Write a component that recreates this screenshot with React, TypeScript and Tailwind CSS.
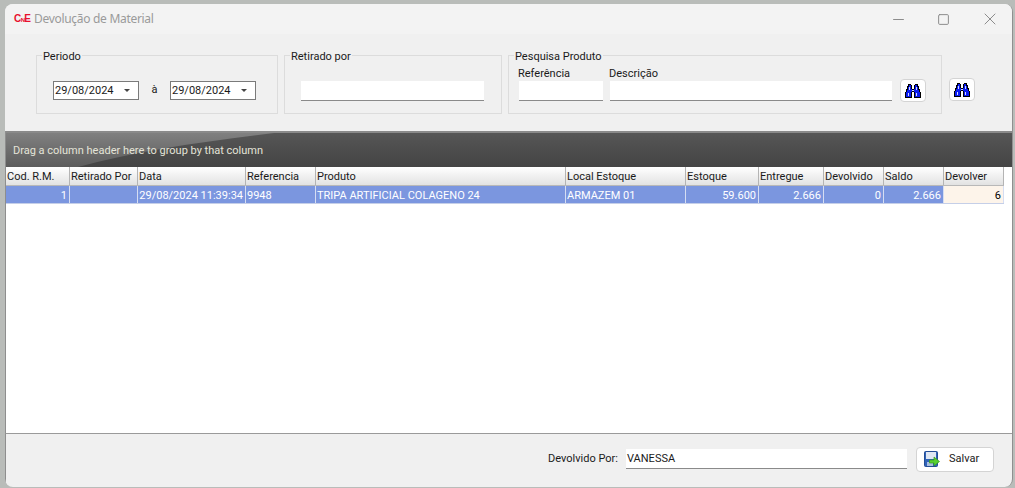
import React from 'react';
import { Minus, Square, X } from 'lucide-react';

const columns = [
  { label: 'Cod. R.M.', width: 'w-[64px]', value: '1', right: true },
  { label: 'Retirado Por', width: 'w-[68px]', value: '' },
  { label: 'Data', width: 'w-[108px]', value: '29/08/2024 11:39:34', right: true },
  { label: 'Referencia', width: 'w-[70px]', value: '9948' },
  { label: 'Produto', width: 'w-[250px]', value: 'TRIPA ARTIFICIAL COLAGENO 24' },
  { label: 'Local Estoque', width: 'w-[120px]', value: 'ARMAZEM 01' },
  { label: 'Estoque', width: 'w-[73px]', value: '59.600', right: true },
  { label: 'Entregue', width: 'w-[65px]', value: '2.666', right: true },
  { label: 'Devolvido', width: 'w-[60px]', value: '0', right: true },
  { label: 'Saldo', width: 'w-[60px]', value: '2.666', right: true },
];

function Binoculars() {
  return (
    <svg width="16" height="14" viewBox="0 0 16 14" shapeRendering="crispEdges">
      <path d="M3 0h3v1h1v4h2V1h1V0h3v2h1v3h1v3h1v6H9V8H7v6H0V8h1V5h1V2h1z" fill="#000" />
      <path d="M4 1h2v4h1v2h2V5h1V1h2v2h1v3h1v2h1v5h-5V8H9V7H7v1H6v5H1V8h1V6h1V3h1z" fill="#0b1cf2" />
      <path d="M4 3h1v3H4zM3 9h1v3H3zM11 3h1v3h-1zM11 9h1v3h-1zM7 6h2v1H7z" fill="#cfd6ff" />
    </svg>
  );
}

function SaveIcon() {
  return (
    <svg width="16" height="16" viewBox="0 0 16 16">
      <rect x="0.500" y="0.500" width="13" height="15" rx="1" fill="#2f62b8" stroke="#234c94" />
      <rect x="2" y="1" width="10" height="7" fill="#dfe7f3" />
      <rect x="3" y="11" width="6" height="4" fill="#a9bedd" />
      <path d="M5.500 9h4.500V6l5.500 4.500-5.500 4.500v-3H5.500z" fill="#58d02f" stroke="#2f9a1c" strokeWidth="0.7" />
    </svg>
  );
}

function GroupBox({ title, className, children }: { title: string; className: string; children: React.ReactNode }) {
  return (
    <div className={`relative border border-[#dcdcdc] h-[59px] ${className}`}>
      <span className="absolute -top-[7px] left-[5px] bg-[#f0f0f0] px-px leading-[15px] text-[#1a1a1a]">{title}</span>
      {children}
    </div>
  );
}

function DateInput({ value }: { value: string }) {
  return (
    <div className="flex items-center justify-between w-[86px] h-[19px] bg-white border border-[#7a7a7a] pl-px pr-[8px]">
      <span className="pt-px">{value}</span>
      <span className="w-0 h-0 border-x-[3px] border-x-transparent border-t-[3px] border-t-[#444]" />
    </div>
  );
}

function TextBox({ className, children }: { className: string; children?: React.ReactNode }) {
  return (
    <div className={`h-[20px] bg-white border-b border-[#8a8a8a] px-px leading-[19px] ${className}`}>{children}</div>
  );
}

function SearchButton() {
  return (
    <button className="flex items-center justify-center w-[26px] h-[23px] bg-white border border-[#d4d4d4] rounded-[4px]">
      <Binoculars />
    </button>
  );
}

export default function App() {
  return (
    <div className="w-[1015px] h-[488px] overflow-hidden bg-[#b9bcb9] pt-[4px] pl-[5px] pr-[2px] pb-px font-['Roboto',sans-serif] text-[11px] text-[#1a1a1a]">
      <div className="flex flex-col h-full rounded-[8px] overflow-hidden bg-[#f0f0f0] border-r border-[#8f8f8f]">
        {/* Title bar */}
        <div className="flex items-center h-[30px] shrink-0 bg-[#f3f3f3] pl-[9px]">
          <span className="flex items-baseline w-[20px] font-['Liberation_Sans',sans-serif] font-bold text-[#e8112d] leading-none tracking-[-0.6px]">
            <span className="text-[10px]">C</span>
            <span className="text-[6px]">N</span>
            <span className="text-[10px]">E</span>
          </span>
          <span className="font-['Noto_Sans',sans-serif] text-[12px] tracking-[-0.3px] text-[#9a9a9a]">Devolução de Material</span>
          <div className="ml-auto flex items-center text-[#8c8c8c]">
            <Minus size={17} absoluteStrokeWidth strokeWidth={1} className="mr-[30px]" />
            <Square size={13} absoluteStrokeWidth strokeWidth={1} className="mr-[30px]" />
            <X size={20} absoluteStrokeWidth strokeWidth={1} className="mr-[12px]" />
          </div>
        </div>

        {/* Filters */}
        <div className="flex h-[97px] shrink-0 pt-[21px] pl-[31px]">
          <GroupBox title="Periodo" className="w-[242px] flex items-center pl-[16px] pt-[12px]">
            <DateInput value="29/08/2024" />
            <span className="w-[31px] text-center">à</span>
            <DateInput value="29/08/2024" />
          </GroupBox>
          <GroupBox title="Retirado por" className="w-[218px] ml-[6px] pl-[16px] pt-[25px]">
            <TextBox className="w-[183px]" />
          </GroupBox>
          <GroupBox title="Pesquisa Produto" className="w-[434px] ml-[6px]">
            <div className="flex pt-[10px] pl-[9px] leading-[15px]">
              <span className="w-[91px]">Referência</span>
              <span>Descrição</span>
            </div>
            <div className="flex items-start pl-[10px]">
              <TextBox className="w-[84px] mr-[7px]" />
              <TextBox className="w-[282px] mr-[8px]" />
              <div className="-mt-[2px]">
                <SearchButton />
              </div>
            </div>
          </GroupBox>
          <div className="ml-[7px] pt-[23px]">
            <SearchButton />
          </div>
        </div>

        {/* Grid */}
        <div className="flex-1 min-h-0 bg-white border-l border-[#8e8e8e]">
          <div className="relative h-[36px] bg-gradient-to-b from-[#565656] to-[#444444] border-t-2 border-[#8a8a8a]">
            <svg className="absolute left-0 top-0" width="280" height="34" viewBox="0 0 280 34">
              <defs>
                <linearGradient id="wedge" x1="0" y1="0" x2="0" y2="1">
                  <stop offset="0" stopColor="#808080" />
                  <stop offset="1" stopColor="#5c5c5c" />
                </linearGradient>
              </defs>
              <path d="M0 0H268C200 8 130 18 72 34H0z" fill="url(#wedge)" />
            </svg>
            <span className="absolute left-[7px] top-[10px] text-[#e4e4d8]">Drag a column header here to group by that column</span>
          </div>
          <div className="flex w-fit h-[19px] bg-gradient-to-b from-white to-[#e2e2e2] border-b border-[#b8b8b8]">
            {columns.map((c) => (
              <div key={c.label} className={`${c.width} shrink-0 border-r border-[#b4b4b4] pl-px leading-[20px] whitespace-nowrap overflow-hidden`}>
                {c.label}
              </div>
            ))}
            <div className="w-[60px] shrink-0 border-r border-[#b4b4b4] pl-px leading-[20px]">Devolver</div>
          </div>
          <div className="flex w-fit h-[18px] border-b border-[#c5cfe8]">
            {columns.map((c) => (
              <div
                key={c.label}
                className={`${c.width} shrink-0 bg-[#7b96df] border-r border-[#d5ddf2] pl-px pr-[2px] leading-[19px] text-white whitespace-nowrap overflow-hidden ${c.right ? 'text-right' : ''}`}
              >
                {c.value}
              </div>
            ))}
            <div className="w-[60px] shrink-0 bg-[#fdf4ea] border-r border-[#d5ddf2] px-[2px] leading-[19px] text-right text-black">6</div>
          </div>
        </div>

        {/* Footer */}
        <div className="flex items-center justify-end h-[54px] shrink-0 border-t border-[#9a9a9a] pr-[18px] pb-[3px] border-l border-l-[#8e8e8e]">
          <span className="mr-[8px]">Devolvido Por:</span>
          <TextBox className="w-[281px] mr-[9px]">VANESSA</TextBox>
          <button className="flex items-center w-[78px] h-[25px] bg-white border border-[#d4d4d4] rounded-[4px] pl-[7px]">
            <SaveIcon />
            <span className="ml-[9px]">Salvar</span>
          </button>
        </div>
      </div>
    </div>
  );
}
